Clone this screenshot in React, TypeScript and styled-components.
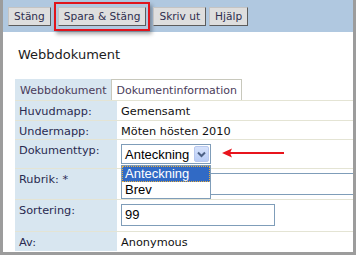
import styled, { createGlobalStyle } from "styled-components";

const GlobalStyle = createGlobalStyle`
  body {
    margin: 0;
    background: #ffffff;
    font-family: "DejaVu Sans", Verdana, sans-serif;
  }
`;

const Frame = styled.div`
  width: 356px;
  height: 255px;
  box-sizing: border-box;
  border: 3px solid #9c9c9c;
  border-top: none;
  background: #ffffff;
  overflow: hidden;
`;

const Toolbar = styled.div`
  height: 32px;
  background: #b0c8e0;
  display: flex;
  align-items: center;
  gap: 3px;
  padding-left: 5px;
`;

const Button = styled.button`
  height: 19px;
  padding: 0 5px;
  background: #dedede;
  border: 1px solid;
  border-color: #c4c4c4 #5c5c5c #5c5c5c #c4c4c4;
  font-family: "DejaVu Sans", Verdana, sans-serif;
  font-size: 10.6px;
  color: #2e2e4e;
  cursor: pointer;
`;

const Highlight = styled.span`
  display: flex;
  padding: 3px 2px;
  border: 2px solid #e0141c;
  box-shadow: 2px 3px 4px rgba(0, 0, 0, 0.35);
`;

const Content = styled.div`
  padding-left: 12px;
`;

const Title = styled.h1`
  margin: 0;
  padding: 15px 0 0 3px;
  height: 32px;
  font-size: 13px;
  font-weight: normal;
  color: #1c1c1c;
`;

const Tabs = styled.div`
  display: flex;
  height: 21px;
`;

const Tab = styled.div<{ $active?: boolean }>`
  display: flex;
  align-items: center;
  padding: 0 4px;
  box-sizing: border-box;
  font-size: 11px;
  color: #4a3c5a;
  background: ${({ $active }) => ($active ? "#d8e6f0" : "#ffffff")};
  border: 1px solid ${({ $active }) => ($active ? "#d8e6f0" : "#c8c8bc")};
  border-bottom: none;
`;

const Form = styled.div`
  display: grid;
  grid-template-columns: 102px 1fr;
`;

const Label = styled.div<{ $h: number }>`
  height: ${({ $h }) => $h}px;
  box-sizing: border-box;
  border-top: 1px solid #e4e4d4;
  background: #d8e6f0;
  padding: 4px 4px 0;
  font-size: 11.3px;
  color: #2a2a50;
  line-height: 13px;
`;

const Value = styled.div<{ $h: number }>`
  position: relative;
  height: ${({ $h }) => $h}px;
  box-sizing: border-box;
  border-top: 1px solid #e4e4d4;
  padding: 4px 4px 0;
  font-size: 11.3px;
  color: #111111;
  line-height: 13px;
`;

const Select = styled.div`
  display: flex;
  align-items: center;
  justify-content: space-between;
  width: 90px;
  height: 20px;
  box-sizing: border-box;
  border: 1px solid #7f9db9;
  padding: 0 1px 0 3px;
  font-family: "Liberation Sans", Arial, sans-serif;
  font-size: 13px;
  color: #000000;
`;

const SelectButton = styled.span`
  display: flex;
  align-items: center;
  justify-content: center;
  width: 15px;
  height: 16px;
  box-sizing: border-box;
  border: 1px solid #b8c8ee;
  background: linear-gradient(#d6e2fb, #b9cdf6);
  border-radius: 2px;
`;

const Dropdown = styled.div`
  position: absolute;
  left: 4px;
  top: 25px;
  width: 90px;
  box-sizing: border-box;
  border: 1px solid #7f9db9;
  background: #ffffff;
  font-family: "Liberation Sans", Arial, sans-serif;
  font-size: 13px;
  z-index: 2;
`;

const Option = styled.div<{ $selected?: boolean }>`
  height: 16px;
  line-height: 15px;
  padding-left: 3px;
  box-sizing: border-box;
  color: ${({ $selected }) => ($selected ? "#ffffff" : "#000000")};
  background: ${({ $selected }) => ($selected ? "#316ac5" : "#ffffff")};
  outline: ${({ $selected }) => ($selected ? "1px dotted #e8b040" : "none")};
  outline-offset: -1px;
`;

const Input = styled.div<{ $w?: number }>`
  width: ${({ $w }) => ($w ? `${$w}px` : "calc(100% + 6px)")};
  height: 22px;
  box-sizing: border-box;
  border: 1px solid #7f9db9;
  padding: 2px 3px;
  font-family: "Liberation Sans", Arial, sans-serif;
  font-size: 13px;
  line-height: 16px;
  color: #000000;
`;

const Arrow = styled.svg`
  position: absolute;
  left: 103px;
  top: 5px;
`;

const rows = [
  { label: "Huvudmapp:", h: 20 },
  { label: "Undermapp:", h: 19 },
  { label: "Dokumenttyp:", h: 29 },
  { label: "Rubrik: *", h: 31 },
  { label: "Sortering:", h: 32 },
  { label: "Av:", h: 20 },
];

export default function App() {
  return (
    <>
      <GlobalStyle />
      <Frame>
        <Toolbar>
          <Button>Stäng</Button>
          <Highlight>
            <Button>Spara &amp; Stäng</Button>
          </Highlight>
          <Button>Skriv ut</Button>
          <Button>Hjälp</Button>
        </Toolbar>
        <Content>
          <Title>Webbdokument</Title>
          <Tabs>
            <Tab $active>Webbdokument</Tab>
            <Tab>Dokumentinformation</Tab>
          </Tabs>
          <Form>
            <Label $h={rows[0].h}>{rows[0].label}</Label>
            <Value $h={rows[0].h}>Gemensamt</Value>

            <Label $h={rows[1].h}>{rows[1].label}</Label>
            <Value $h={rows[1].h}>Möten hösten 2010</Value>

            <Label $h={rows[2].h}>{rows[2].label}</Label>
            <Value $h={rows[2].h}>
              <Select>
                Anteckning
                <SelectButton>
                  <svg width="9" height="7" viewBox="0 0 9 7">
                    <path d="M1 1.5 L4.5 5 L8 1.5" fill="none" stroke="#4d6185" strokeWidth="2" />
                  </svg>
                </SelectButton>
              </Select>
              <Dropdown>
                <Option $selected>Anteckning</Option>
                <Option>Brev</Option>
              </Dropdown>
              <Arrow width="80" height="20" viewBox="0 0 80 20">
                <defs>
                  <filter id="blur" x="-20%" y="-100%" width="140%" height="300%">
                    <feGaussianBlur stdDeviation="1.5" />
                  </filter>
                </defs>
                <line x1="12" y1="13" x2="72" y2="13" stroke="#7c7c7c" strokeWidth="3.5" filter="url(#blur)" />
                <line x1="8" y1="8" x2="64" y2="8" stroke="#e8141c" strokeWidth="2" />
                <path d="M2 8 L12 3.5 L10 8 L12 12.5 Z" fill="#e8141c" />
              </Arrow>
            </Value>

            <Label $h={rows[3].h}>{rows[3].label}</Label>
            <Value $h={rows[3].h}>
              <Input />
            </Value>

            <Label $h={rows[4].h}>{rows[4].label}</Label>
            <Value $h={rows[4].h}>
              <Input $w={154}>99</Input>
            </Value>

            <Label $h={rows[5].h}>{rows[5].label}</Label>
            <Value $h={rows[5].h}>Anonymous</Value>
          </Form>
        </Content>
      </Frame>
    </>
  );
}
